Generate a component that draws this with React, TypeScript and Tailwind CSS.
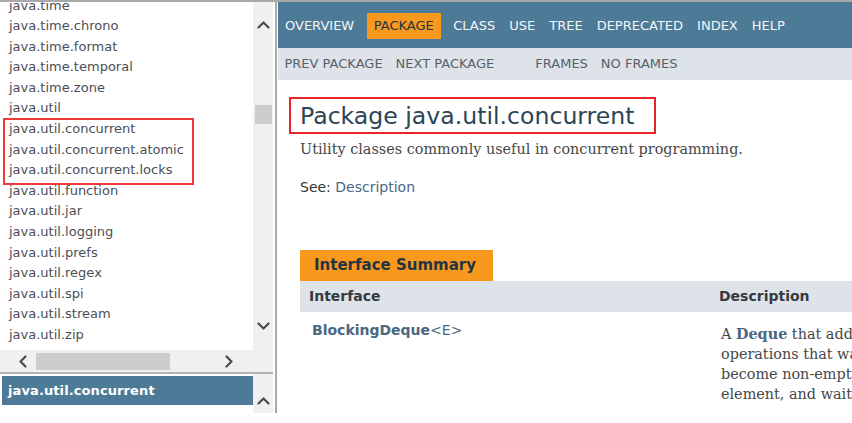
import React from 'react';

const packages = [
  'java.time',
  'java.time.chrono',
  'java.time.format',
  'java.time.temporal',
  'java.time.zone',
  'java.util',
  'java.util.concurrent',
  'java.util.concurrent.atomic',
  'java.util.concurrent.locks',
  'java.util.function',
  'java.util.jar',
  'java.util.logging',
  'java.util.prefs',
  'java.util.regex',
  'java.util.spi',
  'java.util.stream',
  'java.util.zip',
  'javax.accessibility',
];

const topNav = ['Overview', 'Package', 'Class', 'Use', 'Tree', 'Deprecated', 'Index', 'Help'];

const Chevron: React.FC<{ dir: 'up' | 'down' | 'left' | 'right' }> = ({ dir }) => {
  const d = {
    up: 'M1.5 7.5 L6.5 2.5 L11.5 7.5',
    down: 'M1.5 2.5 L6.5 7.5 L11.5 2.5',
    left: 'M7.5 1.5 L2.5 6.5 L7.5 11.5',
    right: 'M2.5 1.5 L7.5 6.5 L2.5 11.5',
  }[dir];
  const vertical = dir === 'up' || dir === 'down';
  return (
    <svg width={vertical ? 13 : 10} height={vertical ? 10 : 13} viewBox={vertical ? '0 0 13 10' : '0 0 10 13'}>
      <path d={d} fill="none" stroke="#4b4b4b" strokeWidth="2.2" strokeLinecap="round" strokeLinejoin="round" />
    </svg>
  );
};

const LeftFrames: React.FC = () => (
  <div className="w-[275px] flex flex-col">
    {/* package list frame */}
    <div className="h-[370px] flex flex-col">
      <div className="h-[348px] flex">
        <div className="relative w-[253px] pl-[9px] overflow-hidden">
          <ul className="-mt-[6.5px]">
            {packages.map((p) => (
              <li key={p} className="h-[20.6px] leading-[20.6px] text-[13px] text-[#4a4f56] whitespace-nowrap">
                {p}
              </li>
            ))}
          </ul>
          <div className="absolute left-[3px] top-[116px] w-[191px] h-[67px] border-2 border-[#ee3a3a]" />
        </div>
        <div className="w-[20px] bg-[#f0f0f0] flex flex-col items-center pt-[18px] pb-[19px]">
          <Chevron dir="up" />
          <div className="mt-[75px] w-[17px] h-[19px] bg-[#cdcdcd]" />
          <div className="mt-auto">
            <Chevron dir="down" />
          </div>
        </div>
      </div>
      <div className="h-[22px] w-[273px] bg-[#f0f0f0] flex items-center">
        <div className="w-[36px] flex justify-center pl-[9px]">
          <Chevron dir="left" />
        </div>
        <div className="w-[134px] h-[17px] bg-[#cdcdcd]" />
        <div className="w-[83px] flex justify-center pl-[35px]">
          <Chevron dir="right" />
        </div>
      </div>
    </div>
    <div className="h-[2px] w-[273px] bg-[#b3b3b3]" />
    {/* selected package frame */}
    <div className="h-[39px] flex">
      <div className="w-[253px] pl-[2px] pt-[2px]">
        <div className="h-[29px] bg-[#4d7a97] pl-[6px] flex items-center text-[13px] font-bold text-white tracking-[0.1px]">
          java.util.concurrent
        </div>
      </div>
      <div className="w-[20px] bg-[#f0f0f0] flex flex-col items-center justify-end pb-[7px]">
        <Chevron dir="up" />
      </div>
    </div>
  </div>
);

const RightFrame: React.FC = () => (
  <div className="flex-1 ml-px overflow-hidden flex flex-col">
    <div className="h-[46px] bg-[#4d7a97] pt-[11px] flex items-start">
      {topNav.map((item) =>
        item === 'Package' ? (
          <div key={item} className="mx-[5.5px] px-[7px] h-[26px] leading-[26px] bg-[#f8981d] text-[13px] uppercase text-[#253441]">
            {item}
          </div>
        ) : (
          <div key={item} className="px-[7px] h-[26px] leading-[26px] text-[13px] uppercase text-[#f4f7f9]">
            {item}
          </div>
        )
      )}
    </div>
    <div className="h-[32px] bg-[#dee3e9] flex items-center text-[13px] uppercase text-[#56616b]">
      <span className="px-[6.5px]">Prev Package</span>
      <span className="px-[6.5px]">Next Package</span>
      <span className="ml-[28px] px-[6.5px]">Frames</span>
      <span className="px-[6.5px]">No Frames</span>
    </div>

    <div className="ml-[11px] mt-[17px] w-[367px] h-[37px] border-2 border-[#e8242a] pl-[9px] flex items-center">
      <h1 className="text-[23.6px] leading-[30px] text-[#2c4557] whitespace-nowrap">Package java.util.concurrent</h1>
    </div>

    <p className="ml-[22px] mt-[5px] text-[14.4px] leading-[20px] text-[#474747] font-['DejaVu_Serif',serif] whitespace-nowrap">
      Utility classes commonly useful in concurrent programming.
    </p>
    <p className="ml-[22px] mt-[18px] text-[14px] leading-[20px] text-[#353833]">
      See: <span className="text-[#4a6782]">Description</span>
    </p>

    <div className="ml-[22px] mt-[53px]">
      <div className="w-[193px] h-[31px] bg-[#f8981d] pl-[14px] leading-[31px] text-[15px] font-bold text-[#253441]">
        Interface Summary
      </div>
      <div className="grid grid-cols-[410px_420px] h-[31px] bg-[#dee3e9] items-center text-[14px] font-bold text-[#353a40]">
        <div className="pl-[9px]">Interface</div>
        <div className="pl-[9px]">Description</div>
      </div>
      <div className="grid grid-cols-[410px_420px]">
        <div className="pl-[12px] pt-[8px] text-[14px] leading-[20px] font-bold text-[#4a6782] whitespace-nowrap">
          BlockingDeque<span className="font-normal">&lt;E&gt;</span>
        </div>
        <div className="pl-[11px] pt-[12px] text-[14.4px] leading-[20px] text-[#474747] font-['DejaVu_Serif',serif] whitespace-nowrap">
          <div>
            A <span className="font-bold text-[#4a6782]">Deque</span> that additionally supports blocking
          </div>
          <div>operations that wait for the deque to</div>
          <div>become non-empty when retrieving an</div>
          <div>element, and wait for space to become</div>
        </div>
      </div>
    </div>
  </div>
);

export default function App() {
  return (
    <div className="w-[852px] h-[423px] overflow-hidden bg-white flex flex-col font-['DejaVu_Sans',sans-serif]">
      <div className="h-[2px] bg-[#a9a9a9]" />
      <div className="flex flex-1 min-h-0">
        <LeftFrames />
        <div className="w-[2px] h-[411px] bg-[#a9a9a9]" />
        <RightFrame />
      </div>
    </div>
  );
}
